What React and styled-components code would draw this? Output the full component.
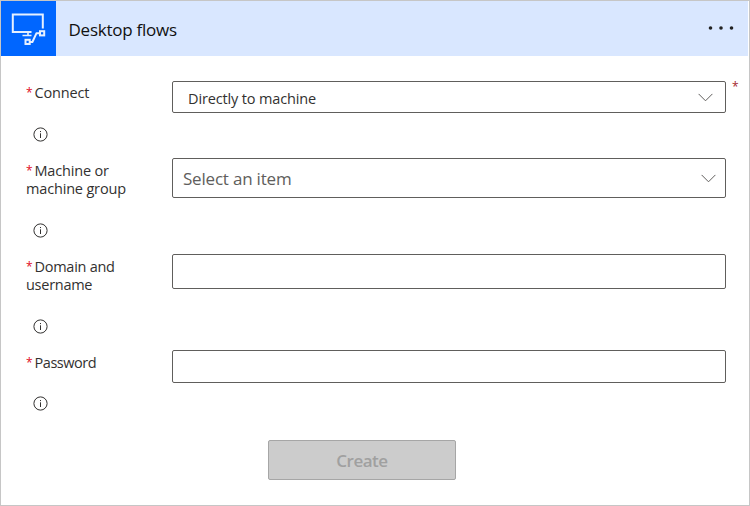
import React from "react";
import styled, { createGlobalStyle } from "styled-components";

const GlobalStyle = createGlobalStyle`
  *, *::before, *::after { box-sizing: border-box; }
  body { margin: 0; background: #fff; font-family: "Open Sans", "Noto Sans", sans-serif; }
`;

const Card = styled.section`
  width: 750px;
  height: 506px;
  border: 1px solid #c6c6c6;
  background: #fff;
  overflow: hidden;
`;

const Header = styled.header`
  display: flex;
  align-items: center;
  height: 55px;
  margin-right: 1px;
  background: #d9e7ff;
`;

const Logo = styled.div`
  width: 55px;
  height: 55px;
  background: #0066ff;
  svg { display: block; }
`;

const Title = styled.h1`
  flex: 1;
  margin: 3px 0 0 12.5px;
  font-size: 17px;
  font-weight: 400;
  line-height: 24px;
  letter-spacing: -0.25px;
  color: #111;
`;

const MenuButton = styled.button`
  display: flex;
  width: 28px;
  height: 12px;
  margin: 0 13px 1px 0;
  padding: 0;
  border: 0;
  background: none;
`;

const Form = styled.form`
  display: flex;
  flex-direction: column;
  padding: 25px 9px 0 25px;
`;

const Row = styled.div`
  display: grid;
  grid-template-columns: 146px 554px 1fr;
  align-items: start;
  height: ${(p) => p.$height}px;
`;

const LabelColumn = styled.div`
  padding-top: ${(p) => p.$top}px;
`;

const Label = styled.label`
  display: block;
  font-size: 14.5px;
  line-height: 18px;
  letter-spacing: ${(p) => p.$spacing}px;
  color: #323130;
`;

const LabelLine = styled.span`
  display: flex;
  height: 18px;
`;

const Star = styled.span`
  width: 8.5px;
  font-size: 12px;
  letter-spacing: 0;
  color: #e00b1c;
`;

const InfoIcon = styled.svg`
  display: block;
  margin: ${(p) => p.$gap}px 0 0 7px;
`;

const Field = styled.div`
  display: flex;
  align-items: center;
  justify-content: space-between;
  height: ${(p) => p.$height}px;
  padding: 0 ${(p) => p.$right}px 0 ${(p) => p.$left}px;
  border: 1px solid #605e5c;
  border-radius: 2px;
  background: #fff;
`;

const Value = styled.span`
  padding-top: ${(p) => p.$drop}px;
  font-size: ${(p) => p.$size}px;
  line-height: 20px;
  letter-spacing: ${(p) => p.$spacing}px;
  color: ${(p) => p.$color};
`;

const Input = styled.input`
  display: block;
  width: 100%;
  height: ${(p) => p.$height}px;
  padding: 0 10px;
  border: 1px solid #605e5c;
  border-radius: 2px;
  outline: 0;
`;

const RequiredMark = styled.span`
  padding-left: 6px;
  margin-top: -3px;
  font-size: 12px;
  line-height: 18px;
  color: #a4262c;
`;

const CreateButton = styled.button`
  width: 188px;
  height: 40px;
  margin-left: 242px;
  padding: 2px 0 0;
  border: 1px solid #a6a6a6;
  border-radius: 2px;
  background: #ccc;
  color: #a0a0a0;
  font: 600 17px/24px "Open Sans", sans-serif;
  letter-spacing: -0.5px;
`;

const FlowLogo = () => (
  <svg width="55" height="55" viewBox="1 1 55 55" fill="none" stroke="#e6f0ff" strokeWidth="2">
    <path d="M31.5 32H12.8V14.5H42.8V28.5" />
    <path d="M28 32.5V35.5M22.5 35.5H31.5" strokeWidth="1.6" />
    <rect x="40" y="31.2" width="4.2" height="4.2" />
    <rect x="25.5" y="39.8" width="4.2" height="4.2" />
    <path d="M30 42H32.4L36.4 33.3H40" strokeLinejoin="round" />
  </svg>
);

const Info = ({ gap }) => (
  <InfoIcon $gap={gap} width="15" height="15" viewBox="0 0 15 15">
    <circle cx="7.5" cy="7.5" r="6.6" fill="none" stroke="#323130" />
    <path d="M7.5 6.3V11" stroke="#323130" />
    <path d="M7.5 4V5.1" stroke="#323130" />
  </InfoIcon>
);

const Chevron = () => (
  <svg width="15" height="9" viewBox="0 0 15 9" fill="none" stroke="#605e5c">
    <path d="M0.6 0.9L7.5 7.8L14.4 0.9" />
  </svg>
);

const FormRow = ({ height, top, lines, spacing, gap, mark, children }) => (
  <Row $height={height}>
    <LabelColumn $top={top}>
      <Label $spacing={spacing}>
        {lines.map((line, i) => (
          <LabelLine key={line}>
            {i === 0 && <Star>*</Star>}
            <span>{line}</span>
          </LabelLine>
        ))}
      </Label>
      <Info gap={gap} />
    </LabelColumn>
    {children}
    {mark && <RequiredMark>*</RequiredMark>}
  </Row>
);

export default function App() {
  return (
    <>
      <GlobalStyle />
      <Card>
        <Header>
          <Logo><FlowLogo /></Logo>
          <Title>Desktop flows</Title>
          <MenuButton type="button" aria-label="More options">
            <svg width="28" height="12" viewBox="0 0 28 12" fill="#222">
              <circle cx="3.5" cy="6" r="1.8" />
              <circle cx="14" cy="6" r="1.8" />
              <circle cx="24.5" cy="6" r="1.8" />
            </svg>
          </MenuButton>
        </Header>
        <Form>
          <FormRow height={77} top={3} gap={24.5} lines={["Connect"]} spacing={-0.15} mark>
            <Field $height={32} $left={15} $right={12}>
              <Value $size={14.5} $spacing={-0.14} $drop={3} $color="#323130">Directly to machine</Value>
              <Chevron />
            </Field>
          </FormRow>
          <FormRow height={96} top={4} gap={24.5} lines={["Machine or", "machine group"]} spacing={-0.17}>
            <Field $height={40} $left={10} $right={9}>
              <Value $size={17} $spacing={-0.2} $drop={1} $color="#605e5c">Select an item</Value>
              <Chevron />
            </Field>
          </FormRow>
          <FormRow height={96} top={4} gap={24.5} lines={["Domain and", "username"]} spacing={-0.27}>
            <Input $height={35} type="text" aria-label="Domain and username" />
          </FormRow>
          <FormRow height={90} top={4} gap={23.5} lines={["Password"]} spacing={-0.45}>
            <Input $height={33} type="password" aria-label="Password" />
          </FormRow>
          <CreateButton type="button" disabled>Create</CreateButton>
        </Form>
      </Card>
    </>
  );
}
